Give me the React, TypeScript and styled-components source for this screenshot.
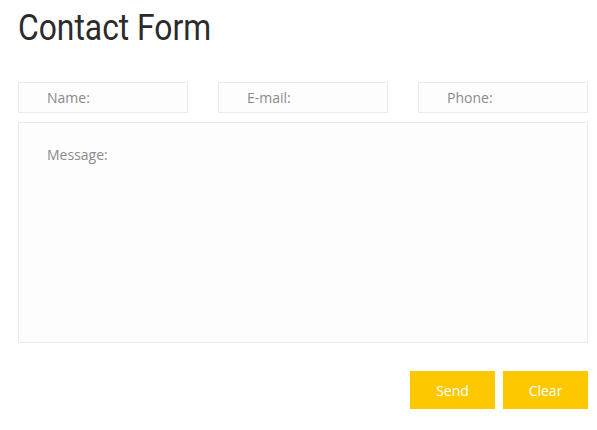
import styled, { createGlobalStyle } from "styled-components";

const GlobalStyle = createGlobalStyle`
  body {
    margin: 0;
    background: #fff;
    font-family: "Open Sans", "Liberation Sans", sans-serif;
  }
`;

const Wrapper = styled.div`
  width: 570px;
  padding: 6px 0 0 18px;
`;

const Title = styled.h1`
  margin: 0;
  font-family: Roboto, "Liberation Sans", sans-serif;
  font-weight: 400;
  font-size: 37px;
  line-height: 44px;
  color: #2b2b2b;
  transform: scaleX(0.86);
  transform-origin: left center;
`;

const Form = styled.form`
  margin-top: 32px;
  display: flex;
  flex-direction: column;
  gap: 9px;
`;

const Row = styled.div`
  display: flex;
  gap: 30px;
`;

const Field = styled.input`
  box-sizing: border-box;
  width: 170px;
  height: 31px;
  padding: 0 0 0 28px;
  border: 1px solid #ebebeb;
  background: #fdfdfd;
  font-family: "Open Sans", "Liberation Sans", sans-serif;
  font-size: 14px;
  color: #444;
  outline: none;
  &::placeholder {
    color: #8a8a8a;
  }
`;

const Message = styled.textarea`
  box-sizing: border-box;
  width: 570px;
  height: 221px;
  padding: 22px 28px;
  border: 1px solid #ebebeb;
  background: #fdfdfd;
  font-family: "Open Sans", "Liberation Sans", sans-serif;
  font-size: 14px;
  resize: none;
  outline: none;
  &::placeholder {
    color: #8a8a8a;
  }
`;

const Actions = styled.div`
  display: flex;
  justify-content: flex-end;
  gap: 8px;
  margin-top: 19px;
`;

const Button = styled.button`
  width: 85px;
  height: 38px;
  border: none;
  background: #fdc800;
  color: #fff;
  font-family: "Open Sans", "Liberation Sans", sans-serif;
  font-size: 14px;
  cursor: pointer;
`;

export default function App() {
  return (
    <>
      <GlobalStyle />
      <Wrapper>
        <Title>Contact Form</Title>
        <Form onSubmit={(e) => e.preventDefault()}>
          <Row>
            <Field placeholder="Name:" />
            <Field placeholder="E-mail:" />
            <Field placeholder="Phone:" />
          </Row>
          <Message placeholder="Message:" />
          <Actions>
            <Button type="submit">Send</Button>
            <Button type="reset">Clear</Button>
          </Actions>
        </Form>
      </Wrapper>
    </>
  );
}
